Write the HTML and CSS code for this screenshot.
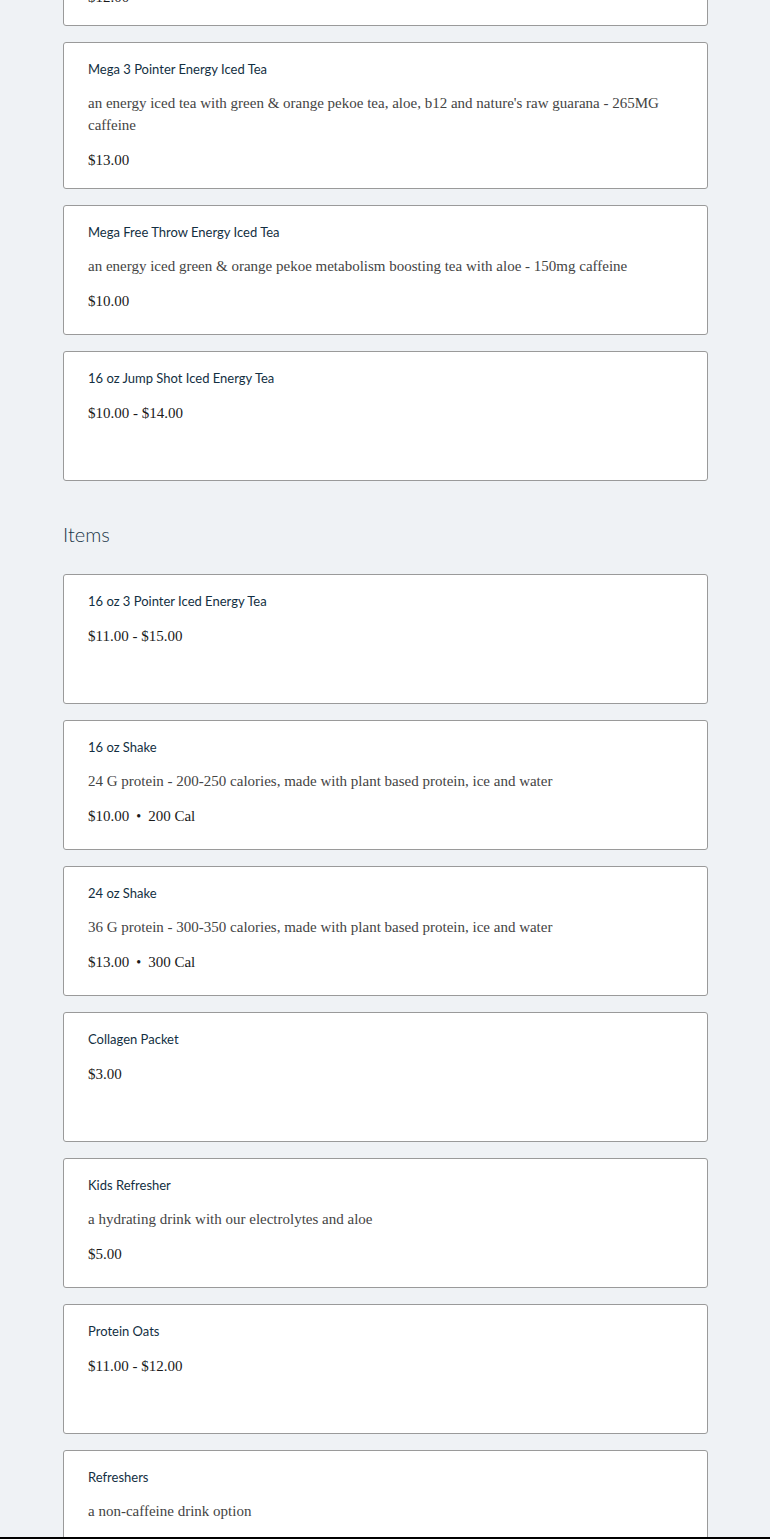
FILE: index.html
```html
<!DOCTYPE html>
<html>
<head>
<meta charset="utf-8">
<link rel="stylesheet" href="styles.css">
</head>
<body>
<main class="menu">
  <section class="section section-first">
    <div class="list">
      <div class="card">
        <div class="card-title">Mega Slam Dunk Energy Iced Tea</div>
        <div class="card-desc">an energy iced tea with green &amp; orange pekoe tea, aloe, b12 and nature's raw guarana - 200MG caffeine</div>
        <div class="card-price">$12.00</div>
      </div>
      <div class="card">
        <div class="card-title">Mega 3 Pointer Energy Iced Tea</div>
        <div class="card-desc">an energy iced tea with green &amp; orange pekoe tea, aloe, b12 and nature's raw guarana - 265MG caffeine</div>
        <div class="card-price">$13.00</div>
      </div>
      <div class="card">
        <div class="card-title">Mega Free Throw Energy Iced Tea</div>
        <div class="card-desc">an energy iced green &amp; orange pekoe metabolism boosting tea with aloe - 150mg caffeine</div>
        <div class="card-price">$10.00</div>
      </div>
      <div class="card">
        <div class="card-title">16 oz Jump Shot Iced Energy Tea</div>
        <div class="card-price">$10.00 - $14.00</div>
      </div>
    </div>
  </section>
  <section class="section">
    <h2 class="section-title">Items</h2>
    <div class="list">
      <div class="card">
        <div class="card-title">16 oz 3 Pointer Iced Energy Tea</div>
        <div class="card-price">$11.00 - $15.00</div>
      </div>
      <div class="card">
        <div class="card-title">16 oz Shake</div>
        <div class="card-desc">24 G protein - 200-250 calories, made with plant based protein, ice and water</div>
        <div class="card-price">$10.00<span class="dot">•</span>200 Cal</div>
      </div>
      <div class="card">
        <div class="card-title">24 oz Shake</div>
        <div class="card-desc">36 G protein - 300-350 calories, made with plant based protein, ice and water</div>
        <div class="card-price">$13.00<span class="dot">•</span>300 Cal</div>
      </div>
      <div class="card">
        <div class="card-title">Collagen Packet</div>
        <div class="card-price">$3.00</div>
      </div>
      <div class="card">
        <div class="card-title">Kids Refresher</div>
        <div class="card-desc">a hydrating drink with our electrolytes and aloe</div>
        <div class="card-price">$5.00</div>
      </div>
      <div class="card">
        <div class="card-title">Protein Oats</div>
        <div class="card-price">$11.00 - $12.00</div>
      </div>
      <div class="card">
        <div class="card-title">Refreshers</div>
        <div class="card-desc">a non-caffeine drink option</div>
        <div class="card-price">$6.00</div>
      </div>
    </div>
  </section>
</main>
<div class="bottom-edge"></div>
</body>
</html>
```
FILE: styles.css
```css
html, body {
  margin: 0;
  padding: 0;
  background: #eff2f5;
}
body {
  font-family: "Liberation Serif", serif;
  overflow: hidden;
}
.menu {
  width: 645px;
  margin: 0 62px 0 63px;
}
.section-first {
  margin-top: -121px;
}
.list {
  display: flex;
  flex-direction: column;
  gap: 16px;
}
.section-title {
  margin: 41px 0 28px;
  font-family: Lato, "Open Sans", sans-serif;
  font-weight: 300;
  font-size: 20px;
  line-height: 24px;
  color: #1b3749;
}
.card {
  box-sizing: border-box;
  min-height: 130px;
  background: #fff;
  border: 1px solid #9a9a9a;
  border-radius: 3px;
  padding: 17px 24px 18px;
}
.card-title {
  font-family: Lato, "Open Sans", sans-serif;
  font-size: 13px;
  line-height: 18px;
  color: #132f42;
}
.card-desc {
  margin-top: 14px;
  font-size: 15px;
  line-height: 22px;
  color: #444;
}
.card-price {
  margin-top: 14px;
  font-size: 15px;
  line-height: 20px;
  color: #1a1a1a;
}
.card-title + .card-price {
  margin-top: 16px;
}
.dot {
  display: inline-block;
  margin: 0 7px;
  font-size: 14px;
}
.bottom-edge {
  position: fixed;
  left: 0;
  right: 0;
  bottom: 0;
  height: 2px;
  background: #000;
}
```
